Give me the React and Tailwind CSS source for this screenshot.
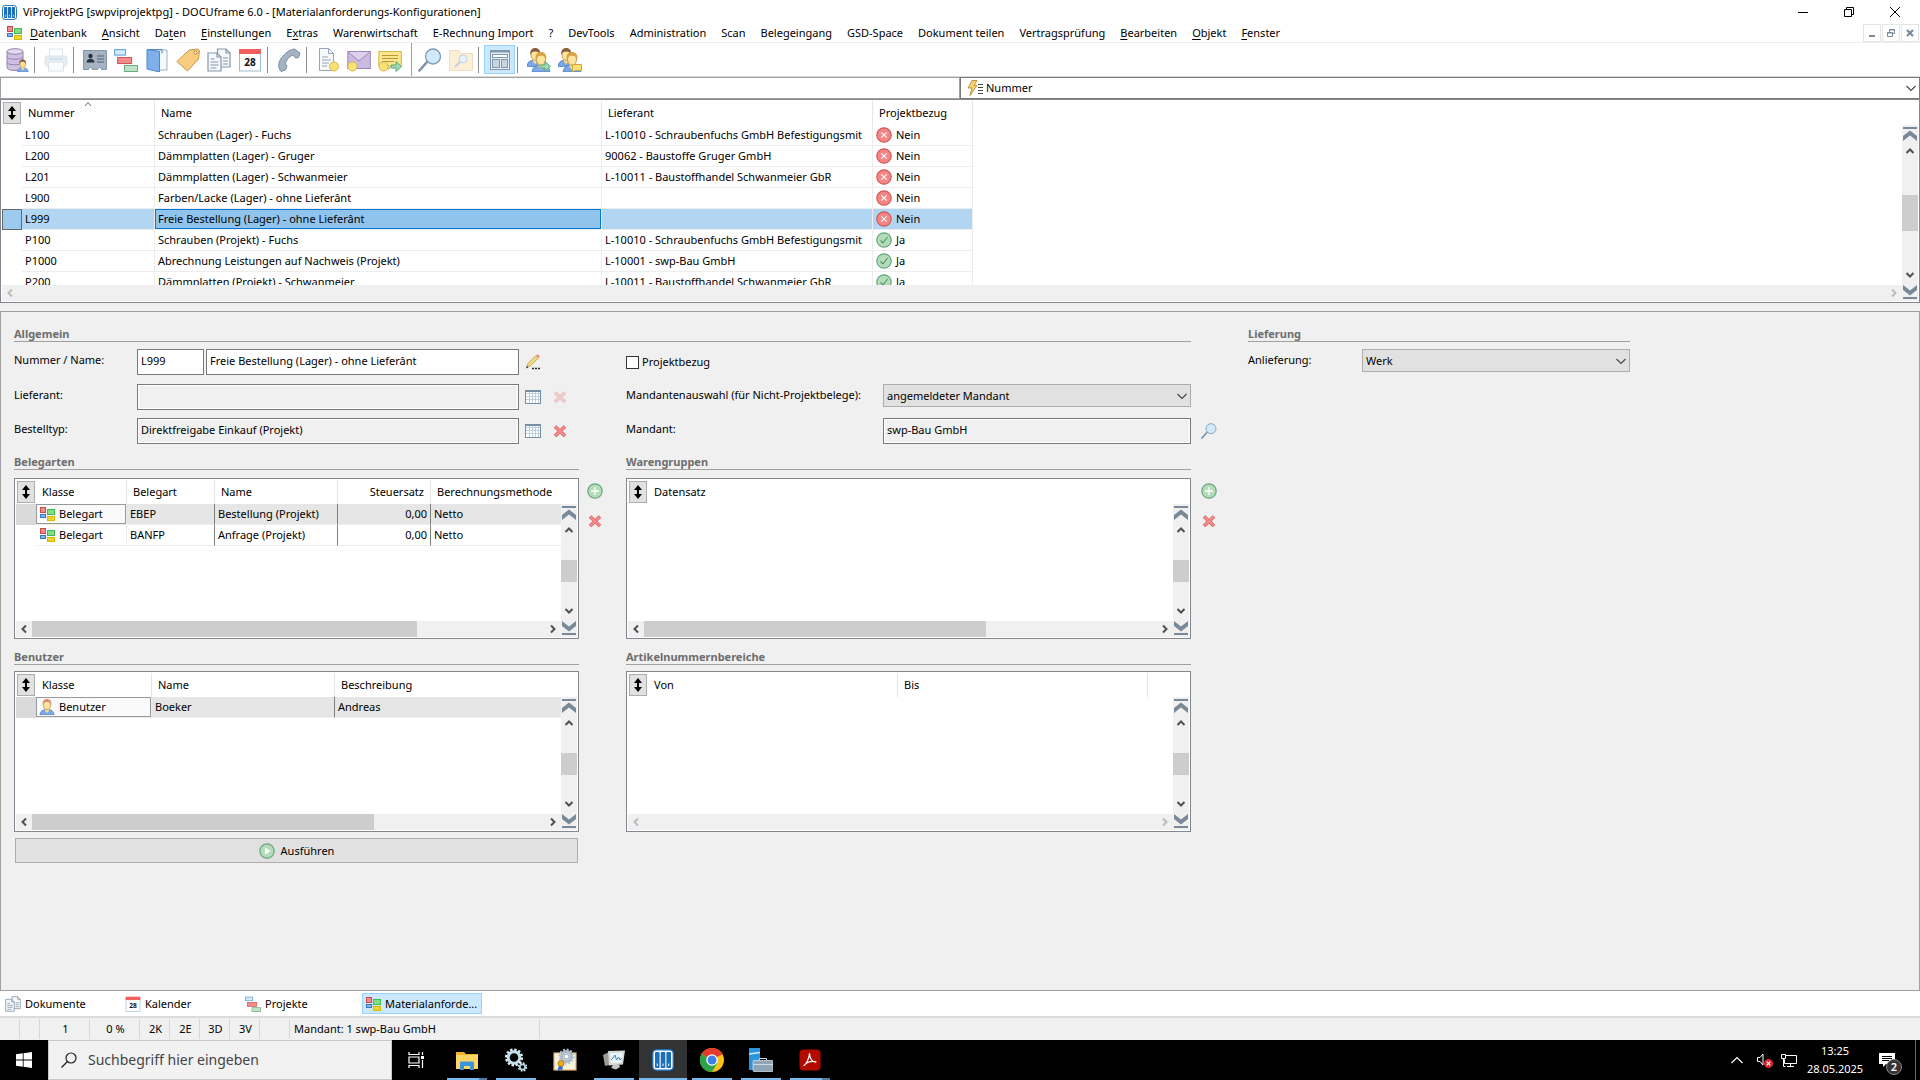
import { useState } from "react";

// ---------- small icons ----------

const BlocksIcon = ({ className = "w-4 h-4" }) => (
  <svg className={className} viewBox="0 0 16 16">
    <rect x="1.5" y="1.5" width="5" height="5" fill="#f28b8b" stroke="#c94a4a" />
    <rect x="1.5" y="8.5" width="5" height="3" fill="#8ab4ee" stroke="#3f74c4" />
    <rect x="8.5" y="3.5" width="7" height="5" fill="#84dd84" stroke="#3dbb55" />
    <rect x="8.5" y="10.5" width="7" height="4" fill="#ecd62c" stroke="#d9b60c" />
  </svg>
);

const AppIcon = ({ className = "w-4 h-4" }) => (
  <svg className={className} viewBox="0 0 22 22">
    <rect x="0.7" y="0.7" width="20.6" height="20.6" rx="4" fill="#fff" stroke="#1b6fb8" strokeWidth="1.4" />
    <rect x="3" y="3" width="4.6" height="16" rx="1" fill="#1b6fb8" />
    <rect x="8.7" y="3" width="4.6" height="16" rx="1" fill="#1b6fb8" />
    <rect x="14.4" y="3" width="4.6" height="16" rx="1" fill="#1b6fb8" />
    <path d="M5.3 14.5v2.5M11 14.5v2.5M16.7 14.5v2.5" stroke="#fff" strokeWidth="1" />
  </svg>
);

const PagesIcon = ({ className = "w-6 h-6" }) => (
  <svg className={className} viewBox="0 0 24 24" fill="#f6f8fa" stroke="#8497a9" strokeWidth="1.2">
    <path d="M10.5 1h8.500l4 4v14h-12.500z" />
    <path d="M19 1v4h4" fill="none" />
    <path d="M1 5h9l4 4v14h-13z" />
    <path d="M10 5v4h4M3.500 11h4M3.500 14h8M3.500 17h8M3.500 20h6M16 10h5M16 13h5M16 16h5" fill="none" />
  </svg>
);

const TasksIcon = ({ className = "w-6 h-6" }) => (
  <svg className={className} viewBox="0 0 24 24">
    <rect x="0.6" y="1.6" width="11" height="5.500" fill="#cfe9fd" stroke="#5f9fd0" />
    <rect x="3.600" y="9.500" width="14" height="6" fill="#f48b8b" stroke="#d05555" />
    <rect x="10.500" y="17.500" width="13" height="6" fill="#bfe3c6" stroke="#6cab80" />
  </svg>
);

const CalendarIcon = ({ className = "w-6 h-6" }) => (
  <svg className={className} viewBox="0 0 24 24">
    <rect x="1.500" y="2" width="21" height="21" fill="#fdfdfd" stroke="#9fbdd0" />
    <rect x="1" y="1" width="22" height="5" fill="#f0605f" />
    <text x="12" y="18" textAnchor="middle" fontSize="10" fontWeight="700" fontFamily="Open Sans, sans-serif" fill="#111">28</text>
  </svg>
);

const PersonShape = ({ hair = "#8a5a3c" }) => (
  <g>
    <path d="M1 16c0-3.500 2.500-5 5-5.500h4c2.500.5 5 2 5 5.500z" fill="#7ca9e6" stroke="#4c7dc4" strokeWidth=".7" />
    <path d="M6 9h4v3l-2 2-2-2z" fill="#f7dc90" />
    <ellipse cx="8" cy="6" rx="3.600" ry="4.700" fill="#fbe49c" stroke="#c99348" strokeWidth=".8" />
    <path d="M3.800 6c-.8-4 1.500-6 4.200-6s5 2 4.200 6c-.6-2.500-2-3-4.200-3s-3.600.5-4.200 3z" fill={hair} />
  </g>
);

const UserIcon = () => (
  <svg className="w-4 h-4" viewBox="0 0 16 16"><PersonShape hair="#dd8d73" /></svg>
);

const SearchGlass = ({ className = "w-6 h-6" }) => (
  <svg className={className} viewBox="0 0 24 24">
    <path d="M1.500 22.500l8-9" stroke="#7d93a8" strokeWidth="2.600" strokeLinecap="round" />
    <circle cx="15" cy="8.500" r="7.500" fill="#cfe9fd" stroke="#8298b3" strokeWidth="1.300" />
  </svg>
);

const CrossIcon = ({ className = "w-4 h-4" }) => (
  <svg className={className} viewBox="0 0 16 16">
    <path d="M3 3.500l10 9.500M13 3.500l-10 9.500" stroke="#e06464" strokeWidth="3.600" />
    <path d="M3.500 4l9 8.500M12.500 4l-9 8.500" stroke="#f58d8d" strokeWidth="1.800" />
  </svg>
);

const GreenDot = ({ children }) => (
  <svg className="w-4 h-4" viewBox="0 0 16 16">
    <circle cx="8" cy="8" r="7.200" fill="#b5dcb8" stroke="#67a67e" strokeWidth="1.200" />
    {children}
  </svg>
);

const PlusIcon = () => (
  <GreenDot><path d="M8 4v8M4 8h8" stroke="#fff" strokeWidth="1.300" /></GreenDot>
);
const PlayIcon = () => (
  <GreenDot><path d="M6 4.500l5.500 3.500-5.500 3.500z" fill="#fff" /></GreenDot>
);
const YesIcon = () => (
  <GreenDot><path d="M4.500 8.500l2.500 2.500 4.500-6" fill="none" stroke="#4f9068" strokeWidth="1.100" /></GreenDot>
);
const NoIcon = () => (
  <svg className="w-4 h-4" viewBox="0 0 16 16">
    <circle cx="8" cy="8" r="7.200" fill="#f58585" stroke="#d05a5a" strokeWidth="1.200" />
    <path d="M5.300 5.300l5.400 5.400M10.700 5.300l-5.400 5.400" stroke="#fff" strokeWidth="1.200" />
  </svg>
);

const SheetIcon = () => (
  <svg className="w-4 h-4" viewBox="0 0 16 16">
    <rect x="0.500" y="1.500" width="15" height="13" fill="#fff" stroke="#7390a8" />
    <path d="M1 4.500h14M1 7.500h14M1 10.500h14M4.500 3v11M7.500 3v11M10.500 3v11M13.500 3v11" stroke="#bfd0e0" />
    <path d="M0 2h16" stroke="#7390a8" strokeWidth="2" />
  </svg>
);

const PencilIcon = () => (
  <svg className="w-4 h-4" viewBox="0 0 16 16">
    <path d="M1.500 13.500l1.500-4 8-8 2.500 2.200-8 8z" fill="#f6dc7c" stroke="#b8963f" strokeWidth=".8" />
    <path d="M11 1.700l1.500-1.400 2.500 2.200-1.500 1.600z" fill="#e88a8a" />
    <path d="M1 14.500l.8-2.500 1.600 1.400z" fill="#333" />
    <path d="M7 14.500h2M10 14.500h2M13 14.500h2" stroke="#222" strokeWidth="1.500" />
  </svg>
);

const Chevron = () => (
  <svg className="w-3 h-3 shrink-0 pointer-events-none" viewBox="0 0 12 12">
    <path d="M1.500 4l4.500 4.500 4.500-4.500" fill="none" stroke="#444" strokeWidth="1.100" />
  </svg>
);

// ---------- toolbar icons ----------

const DatabaseIcon = () => (
  <svg className="w-6 h-6" viewBox="0 0 24 24">
    <path d="M2 3.500v16c0 4 16 4 16 0v-16z" fill="#cfc0e2" stroke="#9484b4" />
    <ellipse cx="10" cy="3.500" rx="8" ry="2.800" fill="#e2d8ef" stroke="#9484b4" />
    <path d="M2 9c0 3 16 3 16 0M2 14.500c0 3 16 3 16 0" fill="none" stroke="#9484b4" />
    <g transform="translate(11.500 11.500) scale(.78)"><PersonShape /></g>
  </svg>
);

const PrinterIcon = () => (
  <svg className="w-6 h-6 opacity-40" viewBox="0 0 24 24" stroke="#a8bccb">
    <rect x="5.500" y="1" width="13" height="8" fill="#fff" />
    <rect x="1" y="8" width="22" height="10" rx="2" fill="#c8d6e0" />
    <rect x="4.500" y="14" width="15" height="9" fill="#f3f7fb" />
    <path d="M5 11h14" stroke="#87b4dc" strokeWidth="2" />
  </svg>
);

const CardIcon = () => (
  <svg className="w-6 h-6" viewBox="0 0 24 24">
    <path d="M0.500 2.500h23v19h-5l-2-3-2 3h-5l-2-3-2 3h-5z" fill="#a3b3c2" stroke="#8397aa" />
    <circle cx="7.500" cy="8" r="2.200" fill="#26323c" />
    <path d="M3.500 14.500c0-5 8-5 8 0z" fill="#26323c" />
    <path d="M14 8h7M14 11h7M14 14h7" stroke="#53626f" strokeWidth="1.200" />
  </svg>
);

const BookIcon = () => (
  <svg className="w-6 h-6" viewBox="0 0 24 24">
    <path d="M5 2h17v20h-7" fill="#f6f9fc" stroke="#9db5c8" />
    <path d="M2 1.500l12.500 2v20.500l-12.500-3z" fill="#7fb0ec" stroke="#4f86cc" />
    <path d="M2 1.500h15v4" fill="none" stroke="#4f86cc" />
  </svg>
);

const TagIcon = () => (
  <svg className="w-6 h-6" viewBox="0 0 24 24">
    <path d="M0.800 13.500l12.500-11.500 8.500-1 1.700 1.500-1 8.500-11 12z" fill="#f8cd80" stroke="#c8924a" />
    <circle cx="19.500" cy="4.500" r="1.500" fill="#fff" stroke="#b58240" />
  </svg>
);

const PhoneIcon = () => (
  <svg className="w-6 h-6" viewBox="0 0 24 24">
    <path d="M17.500 1l5.500 4-1.500 4.500-3 .5-2.500-3c-4 1.500-7 5.500-7.500 9l1.500 2-1.500 4-4.500 1.500c-3.500-4-3-10 1.500-15s8-7 12-7.500z" fill="#a3b3c4" stroke="#7b8fa5" />
  </svg>
);

const Coin = ({ x, y }) => <circle cx={x} cy={y} r="4.500" fill="#fbe277" stroke="#d8b84c" />;
const GreenArrow = () => <path d="M13 17h5v-3.500l5.500 5-5.500 5v-3.500h-5z" fill="#9fdab0" stroke="#5fa878" />;

const DocCoinIcon = () => (
  <svg className="w-6 h-6" viewBox="0 0 24 24">
    <path d="M3.500 0.500h9l5 5v17h-14z" fill="#f6f8fa" stroke="#95a5b5" />
    <path d="M12.500 0.500v5h5M6 9h6M6 12h9M6 15h7M6 18h5" fill="none" stroke="#95a5b5" />
    <Coin x={18} y={18.500} />
  </svg>
);

const MailCoinIcon = () => (
  <svg className="w-6 h-6" viewBox="0 0 24 24">
    <rect x="0.800" y="3.500" width="22.500" height="17" fill="#cbbbe0" stroke="#9b87bd" />
    <path d="M1 4l11 9 11-9" fill="#ddd1ec" stroke="#9b87bd" />
    <Coin x={5.500} y={18.500} />
  </svg>
);

const NoteCoinIcon = () => (
  <svg className="w-6 h-6" viewBox="0 0 24 24">
    <path d="M0.800 3.500h22.500v14h-10l-3 4v-4h-9.500z" fill="#fbe68c" stroke="#d6b64d" />
    <path d="M4 7.500h16M4 10.500h16M4 13.500h12" stroke="#b7963e" />
    <Coin x={5.500} y={18.500} />
    <GreenArrow />
  </svg>
);

const FolderSearchIcon = () => (
  <svg className="w-6 h-6 opacity-50" viewBox="0 0 24 24">
    <path d="M0.500 2.500h9l2 3h12v17h-23z" fill="#fbe0ac" stroke="#dcc08c" />
    <path d="M6 19l5-5" stroke="#8aa6bd" strokeWidth="2" />
    <circle cx="14" cy="11" r="4" fill="#cfe9fd" stroke="#8aa6bd" />
  </svg>
);

const LayoutIcon = () => (
  <svg className="w-6 h-6" viewBox="0 0 24 24" stroke="#7f98ae">
    <rect x="2.500" y="2.500" width="19" height="19" fill="#e8eef3" />
    <path d="M2.500 3.500h19" strokeWidth="2" />
    <rect x="4.500" y="6.500" width="15" height="3" fill="#fff" />
    <rect x="4.500" y="11.500" width="7" height="8" fill="#c9d6e1" />
    <rect x="13.500" y="11.500" width="6" height="8" fill="#c9d6e1" />
  </svg>
);

const UsersIcon = ({ note }) => (
  <svg className="w-6 h-6" viewBox="0 0 24 24">
    <g transform="translate(-1 0) scale(1.150)"><PersonShape hair="#8b5f3d" /></g>
    <g transform="translate(4 4) scale(1.250)"><PersonShape hair="#d9a244" /></g>
    {note
      ? <path d="M14.500 16.500h9v6h-7l-2 1.500z" fill="#fbe277" stroke="#c9a83c" />
      : <GreenArrow />}
  </svg>
);

// ---------- scroll bars ----------

const Arrow = ({ dir, off }) => {
  const d = {
    up: "M4.500 10l3.500-3.500 3.500 3.500",
    down: "M4.500 6l3.500 3.500 3.500-3.500",
    left: "M10 4.500l-3.500 3.500 3.500 3.500",
    right: "M6 4.500l3.500 3.500-3.500 3.500",
  }[dir];
  return (
    <svg className="w-4 h-4 shrink-0" viewBox="0 0 16 16">
      <path d={d} fill="none" stroke={off ? "#bcbcbc" : "#505050"} strokeWidth="2" />
    </svg>
  );
};

const JumpArrow = ({ down }) => (
  <svg className={down ? "w-4 h-4 rotate-180" : "w-4 h-4"} viewBox="0 0 16 16">
    <path d="M1 3h14" stroke="#7a8999" strokeWidth="2" />
    <path d="M1 11v5l7-5.500 7 5.500v-5l-7-5.500z" fill="#7a8999" />
  </svg>
);

function VScroll({ tall }) {
  return (
    <div className="w-4 mt-6 shrink-0 bg-[#f0f0f0] flex flex-col items-center">
      <JumpArrow />
      <span className="h-5 flex items-center"><Arrow dir="up" /></span>
      <div className="flex-1 w-full flex items-center">
        <div className={tall ? "w-full h-9 bg-[#cdcdcd]" : "w-full h-[22px] bg-[#cdcdcd]"} />
      </div>
      <span className="h-5 flex items-center"><Arrow dir="down" /></span>
      <JumpArrow down />
    </div>
  );
}

function HScroll({ thumb }) {
  return (
    <div className="h-4 shrink-0 bg-[#f0f0f0] flex items-center">
      <Arrow dir="left" off={!thumb} />
      <div className="flex-1 h-full">
        {thumb && <div className={`h-full bg-[#cdcdcd] ${thumb}`} />}
      </div>
      <Arrow dir="right" off={!thumb} />
    </div>
  );
}

// ---------- data grid ----------

const SortButton = () => (
  <button className="block ml-px w-[18px] h-[22px] bg-[#e1e1e1] border border-[#adadad]" aria-label="Sortieren">
    <svg className="w-4 h-5" viewBox="0 0 16 20">
      <path d="M8 3l4 5h-3v4h3l-4 5-4-5h3v-4h-3z" fill="#000" />
    </svg>
  </button>
);

function DataGrid({ columns, rows, selected, focusCol, main, thumb, className }) {
  const rowColor = main ? "bg-[#b2d6f2]" : "bg-[#e6e6e6]";
  const headColor = main ? "bg-[#9dcbef] border border-[#666]" : "bg-[#dadada]";
  const focusColor = main ? "bg-[#91c4ec] border border-[#0078d7]" : "bg-[#fafafa] border border-[#999]";

  return (
    <div className={`flex bg-white border border-[#828790] p-px ${className}`}>
      <div className="flex-1 min-w-0 flex flex-col">
        <div className="flex-1 min-h-0 overflow-hidden">
          <table className={`table-fixed border-separate border-spacing-0 whitespace-nowrap ${main ? "w-[971px]" : "w-full"}`}>
            <colgroup>
              <col className="w-5" />
              {columns.map((c) => <col key={c.label} className={c.width} />)}
            </colgroup>
            <thead>
              <tr className="h-6">
                <th className="p-0"><SortButton /></th>
                {columns.map((c) => (
                  <th
                    key={c.label}
                    className={`p-0 px-1.5 font-normal ${c.right ? "text-right" : "text-left"} ${c.last ? "" : "border-r border-[#e5e5e5]"}`}
                  >
                    {c.sorted ? (
                      <span className="relative block">
                        {c.label}
                        <svg className="absolute left-[56px] -top-1 w-2 h-1.5" viewBox="0 0 8 6">
                          <path d="M1 5l3-3.500 3 3.500" fill="none" stroke="#666" />
                        </svg>
                      </span>
                    ) : c.label}
                  </th>
                ))}
              </tr>
            </thead>
            <tbody>
              {rows.map((row, r) => (
                <tr key={row[0] + r} className={r === selected ? rowColor : ""}>
                  <td className="p-0">
                    <div className={`h-[21px] ${r === selected ? headColor : ""}`} />
                  </td>
                  {row.map((value, i) => {
                    const col = columns[i];
                    const focus = r === selected && i === focusCol;
                    return (
                      <td
                        key={col.label}
                        className={`p-0 border-b border-b-[#ededed] ${col.last ? "" : "border-r"} ${col.dark ? "border-r-[#808080]" : "border-r-[#ededed]"}`}
                      >
                        <div className={`h-5 flex items-center gap-1 ${col.right ? "justify-end" : ""} ${focus ? `${focusColor} px-0.5` : "px-[3px]"}`}>
                          {col.icon && col.icon(value)}
                          {value}
                        </div>
                      </td>
                    );
                  })}
                </tr>
              ))}
            </tbody>
          </table>
        </div>
        <HScroll thumb={thumb} />
      </div>
      <VScroll tall={main} />
    </div>
  );
}

// ---------- form parts ----------

const Heading = ({ children, className = "" }) => (
  <h2 className={`h-[15px] leading-[14px] font-bold text-[#6d6d6d] border-b border-[#a0a0a0] ${className}`}>{children}</h2>
);

const Label = ({ id, children, className = "w-[123px]" }) => (
  <label htmlFor={id} className={`shrink-0 leading-[22px] ${className}`}>{children}</label>
);

const inputBase = "min-w-0 h-[26px] px-[3px] pb-1 border border-[#7a7a7a] outline-none";
const inputLocked = `${inputBase} flex-1 bg-[#f0f0f0] shadow-[inset_0_0_0_1px_#fff]`;

const IconButton = ({ label, children, className = "" }) => (
  <button aria-label={label} className={`w-4 h-[26px] flex items-center justify-center ${className}`}>{children}</button>
);

const Select = ({ id, value, options }) => (
  <div className="flex-1 min-w-0 h-[23px] flex items-center pr-0.5 bg-[#e1e1e1] border border-[#adadad]">
    <select id={id} defaultValue={value} className="flex-1 min-w-0 h-full px-[3px] appearance-none bg-transparent outline-none">
      {options.map((o) => <option key={o}>{o}</option>)}
    </select>
    <Chevron />
  </div>
);

const AddRemove = ({ className }) => (
  <div className={`w-[47px] shrink-0 pt-[5px] flex flex-col gap-[14px] ${className}`}>
    <button aria-label="Hinzufügen"><PlusIcon /></button>
    <button aria-label="Entfernen"><CrossIcon /></button>
  </div>
);

// ---------- data ----------

const menus = [
  ["", "D", "atenbank"], ["", "A", "nsicht"], ["Da", "t", "en"], ["", "E", "instellungen"], ["E", "x", "tras"],
  ["Warenwirtschaft"], ["E-Rechnung Import"], ["?"], ["DevTools"], ["Administration"], ["Scan"], ["Belegeingang"],
  ["GSD-Space"], ["Dokument teilen"], ["Vertragsprüfung"], ["", "B", "earbeiten"], ["", "O", "bjekt"], ["", "F", "enster"],
];

const tools = [
  ["Datenbank", <DatabaseIcon />], null,
  ["Drucken", <PrinterIcon />], null,
  ["Adressen", <CardIcon />], ["Projekte", <TasksIcon />], ["Journal", <BookIcon />], ["Artikel", <TagIcon />],
  ["Dokumente", <PagesIcon />], ["Kalender", <CalendarIcon />], null,
  ["Telefon", <PhoneIcon />], null,
  ["Neues Dokument", <DocCoinIcon />], ["Neue Mail", <MailCoinIcon />], ["Neue Notiz", <NoteCoinIcon />], "group",
  ["Suchen", <SearchGlass />], ["Ordner durchsuchen", <FolderSearchIcon />], null,
  ["Ansicht", <LayoutIcon />, true], null,
  ["Weiterleiten", <UsersIcon />], ["Nachricht", <UsersIcon note />],
];

const configColumns = [
  { label: "Nummer", width: "w-[133px]", sorted: true },
  { label: "Name", width: "w-[447px]" },
  { label: "Lieferant", width: "w-[271px]" },
  { label: "Projektbezug", width: "w-[100px]", icon: (v) => (v === "Ja" ? <YesIcon /> : <NoIcon />) },
];

const configRows = [
  ["L100", "Schrauben (Lager) - Fuchs", "L-10010 - Schraubenfuchs GmbH Befestigungsmit", "Nein"],
  ["L200", "Dämmplatten (Lager) - Gruger", "90062 - Baustoffe Gruger GmbH", "Nein"],
  ["L201", "Dämmplatten (Lager) - Schwanmeier", "L-10011 - Baustoffhandel Schwanmeier GbR", "Nein"],
  ["L900", "Farben/Lacke (Lager) - ohne Lieferânt", "", "Nein"],
  ["L999", "Freie Bestellung (Lager) - ohne Lieferânt", "", "Nein"],
  ["P100", "Schrauben (Projekt) - Fuchs", "L-10010 - Schraubenfuchs GmbH Befestigungsmit", "Ja"],
  ["P1000", "Abrechnung Leistungen auf Nachweis (Projekt)", "L-10001 - swp-Bau GmbH", "Ja"],
  ["P200", "Dämmplatten (Projekt) - Schwanmeier", "L-10011 - Baustoffhandel Schwanmeier GbR", "Ja"],
];

const belegColumns = [
  { label: "Klasse", width: "w-[91px]", icon: () => <BlocksIcon /> },
  { label: "Belegart", width: "w-[88px]", dark: true },
  { label: "Name", width: "w-[123px]", dark: true },
  { label: "Steuersatz", width: "w-[93px]", right: true, dark: true },
  { label: "Berechnungsmethode", last: true },
];

const belegRows = [
  ["Belegart", "EBEP", "Bestellung (Projekt)", "0,00", "Netto"],
  ["Belegart", "BANFP", "Anfrage (Projekt)", "0,00", "Netto"],
];

const userColumns = [
  { label: "Klasse", width: "w-[116px]", icon: () => <UserIcon /> },
  { label: "Name", width: "w-[183px]", dark: true },
  { label: "Beschreibung", last: true },
];

const rangeColumns = [
  { label: "Von", width: "w-[250px]" },
  { label: "Bis", width: "w-[250px]" },
  { label: "", last: true },
];

const tabs = [
  ["Dokumente", <PagesIcon className="w-4 h-4" />],
  ["Kalender", <CalendarIcon className="w-4 h-4" />],
  ["Projekte", <TasksIcon className="w-4 h-4" />],
  ["Materialanforde...", <BlocksIcon />],
];

const statusCells = [
  ["", "w-5"], ["", "w-5"], ["1", "w-[50px]"], ["0 %", "w-[50px]"], ["2K", "w-[30px]"], ["2E", "w-[30px]"],
  ["3D", "w-[30px]"], ["3V", "w-[30px]"], ["", "w-[30px]"],
];

// ---------- window parts ----------

function TitleBar() {
  return (
    <header className="h-6 flex items-center px-0.5">
      <AppIcon className="w-[15px] h-[15px]" />
      <h1 className="flex-1 pl-1.5">ViProjektPG [swpviprojektpg] - DOCUframe 6.0 - [Materialanforderungs-Konfigurationen]</h1>
      <button aria-label="Minimieren" className="w-[46px] h-5 flex items-center justify-center">
        <svg className="w-3 h-3" viewBox="0 0 12 12"><path d="M1 6.500h10" stroke="#000" /></svg>
      </button>
      <button aria-label="Verkleinern" className="w-[46px] h-5 flex items-center justify-center">
        <svg className="w-3 h-3" viewBox="0 0 12 12" fill="none" stroke="#000">
          <path d="M1.500 3.500h7v7h-7zM3.500 3.500v-2h7v7h-2" />
        </svg>
      </button>
      <button aria-label="Schließen" className="w-[46px] h-5 flex items-center justify-center">
        <svg className="w-3 h-3" viewBox="0 0 12 12"><path d="M1 1l10 10M11 1l-10 10" stroke="#000" /></svg>
      </button>
    </header>
  );
}

function MenuBar() {
  const box = "w-[18px] h-[18px] border border-[#e5e5e5] flex items-center justify-center";
  return (
    <nav className="h-[19px] flex items-center border-b border-[#ededed]">
      <BlocksIcon className="w-4 h-4 ml-1.5 mr-2" />
      <div className="flex-1 flex gap-[15px]">
        {menus.map(([pre, key, rest]) => (
          <button key={pre + key + rest} className="whitespace-nowrap">
            {pre}{key && <span className="underline underline-offset-2">{key}</span>}{rest}
          </button>
        ))}
      </div>
      <div className="flex gap-px pr-px">
        <button aria-label="Fenster minimieren" className={box}>
          <svg className="w-2.5 h-2.5" viewBox="0 0 10 10"><path d="M2 8h6" stroke="#7a8999" strokeWidth="2" /></svg>
        </button>
        <button aria-label="Fenster verkleinern" className={box}>
          <svg className="w-2.5 h-2.5" viewBox="0 0 10 10" fill="none" stroke="#7a8999">
            <path d="M1.500 4.500h5v4h-5zM3.500 4v-2.500h5v4h-2M1 5h6M3 2h6" />
          </svg>
        </button>
        <button aria-label="Fenster schließen" className={box}>
          <svg className="w-2.5 h-2.5" viewBox="0 0 10 10"><path d="M2 2l6 6M8 2l-6 6" stroke="#7a8999" strokeWidth="2.200" /></svg>
        </button>
      </div>
    </nav>
  );
}

function Toolbar() {
  return (
    <div className="h-[34px] flex items-center pl-px border-b border-[#d9d9d9]">
      {tools.map((t, i) => {
        if (t === null) return <span key={i} className="w-1.5 h-[26px] ml-0.5 border-l border-[#8c8c8c]" />;
        if (t === "group") return <span key={i} className="w-[3px] h-full ml-1.5 border-l border-[#a0a0a0]" />;
        const [label, icon, active] = t;
        return (
          <button
            key={i}
            aria-label={label}
            className={`w-[31px] h-[29px] flex items-center justify-center ${active ? "bg-[#cce8ff] border border-[#99d1ff]" : ""}`}
          >
            {icon}
          </button>
        );
      })}
    </div>
  );
}

function Taskbar() {
  const line = "h-0.5 bg-[#76b9ed]";
  const apps = [
    {
      name: "Explorer", stack: true,
      icon: (
        <svg className="w-6 h-6" viewBox="0 0 24 24">
          <path d="M1 4h8l2 2h12v15h-22z" fill="#f0b429" />
          <path d="M1 7h22v14h-22z" fill="#fbd667" />
          <path d="M5 22v-7c0-1 .5-1.500 1.500-1.500h11c1 0 1.500.5 1.500 1.500v7h-4v-4h-6v4z" fill="#3a95d8" />
        </svg>
      ),
    },
    {
      name: "Dienste", run: true,
      icon: (
        <svg className="w-6 h-6" viewBox="0 0 24 24" fill="none">
          <circle cx="10" cy="9.500" r="7.800" stroke="#e6f1f7" strokeWidth="2.500" strokeDasharray="2.400 1.680" />
          <circle cx="10" cy="9.500" r="5.800" stroke="#c4dfec" strokeWidth="3" />
          <circle cx="18.500" cy="19" r="3.900" stroke="#d6e8f1" strokeWidth="1.600" strokeDasharray="1.700 1.360" />
          <circle cx="18.500" cy="19" r="2.700" stroke="#b5d5e6" strokeWidth="1.800" />
        </svg>
      ),
    },
    {
      name: "Zertifikate",
      icon: (
        <svg className="w-6 h-6" viewBox="0 0 24 24">
          <rect x="1" y="5" width="22" height="17" fill="#faf1dd" stroke="#e0b67c" strokeWidth="1.200" />
          <circle cx="13.500" cy="8.500" r="5" fill="#dfe9f0" stroke="#a9bac6" strokeWidth="3" />
          <circle cx="13.500" cy="8.500" r="7" fill="none" stroke="#b5c5d0" strokeWidth="2" strokeDasharray="2 1.660" />
          <circle cx="13.500" cy="8.500" r="2.500" fill="#fff" stroke="#8fa3b2" />
          <path d="M6 17l-1.500 6 3-1.500 1.500 2 1-6z" fill="#2c6fd8" />
          <circle cx="8" cy="15.500" r="3" fill="#e8a820" stroke="#b5790c" strokeWidth=".8" />
        </svg>
      ),
    },
    {
      name: "Leistung", run: true,
      icon: (
        <svg className="w-6 h-6" viewBox="0 0 24 24">
          <path d="M1 7l6-3 4 12-8 2z" fill="#9c9c96" />
          <path d="M6 3l17-.5-2 14-14 1z" fill="#d7d9d6" />
          <path d="M8 5l13-.5-1.500 10-11 .8z" fill="#eaf5fb" />
          <path d="M9 12l2-2 2-3 1.500 5 2-3 1.500 3 1.500-2" fill="none" stroke="#3e86b8" />
          <path d="M11 17l6-.5 1 2.500-4 2.500-5-1.500z" fill="#c3c5c2" />
        </svg>
      ),
    },
    { name: "DOCUframe", active: true, icon: <AppIcon className="w-[22px] h-[22px]" /> },
    {
      name: "Chrome", run: true,
      icon: (
        <svg className="w-6 h-6" viewBox="0 0 24 24">
          <circle cx="12" cy="12" r="12" fill="#fbc116" />
          <path d="M12 12L1.600 6A12 12 0 0 1 22.400 6z" fill="#e33b2e" />
          <path d="M1.600 6A12 12 0 0 0 12 24l5.200-9-5.200-3z" fill="#2ba24c" />
          <path d="M12 6.500h10.600a12 12 0 0 0-.2-.5H6z" fill="#e33b2e" />
          <circle cx="12" cy="12" r="5.800" fill="#fff" />
          <circle cx="12" cy="12" r="4.500" fill="#3f7fe8" />
        </svg>
      ),
    },
    {
      name: "Server-Manager", run: true,
      icon: (
        <svg className="w-6 h-6" viewBox="0 0 24 24">
          <rect x="0" y="0" width="11" height="22" fill="#2b94dc" />
          <path d="M0 6l11-1.500" stroke="#d4ecfb" strokeWidth="1.500" />
          <rect x="4" y="12.500" width="20" height="11" rx="1" fill="#8fa6b8" stroke="#d0dae2" strokeWidth=".8" />
          <path d="M10.500 12v-1.500h7v1.500M4 16.500h20" fill="none" stroke="#d0dae2" />
        </svg>
      ),
    },
    {
      name: "Acrobat", stack: true,
      icon: (
        <svg className="w-[22px] h-[22px]" viewBox="0 0 22 22">
          <rect x="0.500" y="0.500" width="21" height="21" rx="4" fill="#b30b00" />
          <path d="M5 16.500c1.500-.5 5-6 5.500-12 .2 5 3 9 6.500 8.500-3-1.500-9-.5-12 3.500z" fill="none" stroke="#fff" strokeWidth="1.200" strokeLinejoin="round" />
        </svg>
      ),
    },
  ];

  return (
    <footer className="h-10 shrink-0 bg-black text-white flex">
      <button aria-label="Start" className="w-12 flex items-center justify-center">
        <svg className="w-4 h-4" viewBox="0 0 16 16" fill="#fff">
          <path d="M0 2.300l6.800-1v6.300h-6.800zM7.600 1.200l8.400-1.200v7.600h-8.400zM0 8.400h6.800v6.300l-6.800-1zM7.600 8.400h8.400v7.600l-8.400-1.200z" />
        </svg>
      </button>
      <label className="w-[344px] flex items-center pl-3 bg-[#f2f2f2] border border-[#c8c8c8]">
        <svg className="w-4 h-4" viewBox="0 0 16 16" fill="none" stroke="#222" strokeWidth="1.200">
          <circle cx="10" cy="6" r="5" /><path d="M6.500 9.500l-6 6" />
        </svg>
        <input
          aria-label="Suche"
          placeholder="Suchbegriff hier eingeben"
          className="flex-1 min-w-0 px-[11px] text-sm bg-transparent outline-none placeholder:text-[#444]"
        />
      </label>
      <button aria-label="Taskansicht" className="w-12 mr-[3px] flex items-center justify-center">
        <svg className="w-4 h-4" viewBox="0 0 16 16" fill="none" stroke="#fff" strokeWidth="1.200">
          <path d="M1 0v2.500h10v-2.500M1 16v-2.500h10v2.500M1 5h10v6h-10zM14.500 0v3M14.500 8v8" />
          <path d="M13 5.500h3" strokeWidth="3" />
        </svg>
      </button>
      <div className="flex gap-px">
        {apps.map((a) => (
          <button key={a.name} aria-label={a.name} className={`w-12 flex flex-col ${a.active ? "bg-[#333]" : ""}`}>
            <span className="flex-1 pt-0.5 w-full flex items-center justify-center">{a.icon}</span>
            {a.active && <span className={`${line} w-full`} />}
            {a.run && <span className={`${line} w-10 mx-auto`} />}
            {a.stack && (
              <span className="w-10 mx-auto flex">
                <span className={`${line} flex-1`} />
                <span className="w-2 h-0.5 bg-[#4f7ea6]" />
              </span>
            )}
            {!a.active && !a.run && !a.stack && <span className="h-0.5" />}
          </button>
        ))}
      </div>
      <div className="flex-1 flex items-center justify-end">
        <button aria-label="Ausgeblendete Symbole" className="w-6 mr-0.5">
          <svg className="w-3 h-3 mx-auto" viewBox="0 0 12 12"><path d="M0.500 9l5.500-5.500 5.500 5.500" fill="none" stroke="#fff" strokeWidth="1.200" /></svg>
        </button>
        <button aria-label="Ton" className="w-6 pl-1.5">
          <svg className="w-4 h-4" viewBox="0 0 16 16">
            <path d="M0.500 5.500h2.500l3-3.500v11l-3-3.500h-2.500z" fill="none" stroke="#fff" />
            <circle cx="11.500" cy="11.500" r="4.500" fill="#e0242e" />
            <path d="M9.700 9.700l3.600 3.600M13.300 9.700l-3.600 3.600" stroke="#fff" strokeWidth="1.200" />
          </svg>
        </button>
        <button aria-label="Netzwerk" className="w-6 pl-1.5">
          <svg className="w-4 h-4" viewBox="0 0 16 16" fill="none" stroke="#fff">
            <path d="M5 3.500h10.500v8h-12v-4M9.500 11.500v3M6 14.500h7M0.500 2.500h4v4h-4zM2.500 6.500v8h2" />
          </svg>
        </button>
        <time className="w-[72px] text-center leading-[18px]">13:25<br />28.05.2025</time>
        <button aria-label="Benachrichtigungen" className="relative w-11 h-full pl-2">
          <svg className="w-4 h-4" viewBox="0 0 16 16">
            <path d="M0 1h16v11h-9l-3 3v-3h-4z" fill="#fff" />
            <path d="M3 4.500h10M3 6.500h10M3 8.500h7" stroke="#000" />
          </svg>
          <span className="absolute left-[15px] top-[19px] w-4 h-4 leading-[14px] rounded-full bg-[#333] border border-[#888] font-semibold text-center">2</span>
        </button>
        <span className="h-full w-[5px] border-l border-[#666]" />
      </div>
    </footer>
  );
}

function ConfigForm() {
  const [nummer, setNummer] = useState("L999");
  const [name, setName] = useState("Freie Bestellung (Lager) - ohne Lieferânt");
  const [projekt, setProjekt] = useState(false);

  return (
    <main className="flex-1 mt-2 pt-[15px] pb-4 pl-[13px] border border-[#a0a0a0] grid grid-cols-[1224fr_10px_382fr_289fr] content-start">
      <section>
        <Heading className="mr-[47px]">Allgemein</Heading>

        <div className="grid grid-cols-2 pt-[7px]">
          {/* Left half */}
          <div>
            <div className="h-[35px] flex items-start">
              <Label id="nummer">Nummer / Name:</Label>
              <input id="nummer" value={nummer} onChange={(e) => setNummer(e.target.value)} className={`${inputBase} w-[67px] mr-0.5 bg-white`} />
              <input aria-label="Name" value={name} onChange={(e) => setName(e.target.value)} className={`${inputBase} flex-1 bg-white`} />
              <div className="w-[107px] pl-1.5 flex">
                <IconButton label="Bearbeiten"><PencilIcon /></IconButton>
              </div>
            </div>
            <div className="h-[34px] flex items-start">
              <Label id="lieferant">Lieferant:</Label>
              <input id="lieferant" readOnly value="" className={inputLocked} />
              <div className="w-[107px] pl-1.5 flex gap-[11px]">
                <IconButton label="Lieferant wählen"><SheetIcon /></IconButton>
                <IconButton label="Lieferant entfernen" className="opacity-35"><CrossIcon /></IconButton>
              </div>
            </div>
            <div className="h-[37px] flex items-start">
              <Label id="bestelltyp">Bestelltyp:</Label>
              <input id="bestelltyp" readOnly value="Direktfreigabe Einkauf (Projekt)" className={inputLocked} />
              <div className="w-[107px] pl-1.5 flex gap-[11px]">
                <IconButton label="Bestelltyp wählen"><SheetIcon /></IconButton>
                <IconButton label="Bestelltyp entfernen"><CrossIcon /></IconButton>
              </div>
            </div>

            <Heading className="mr-[47px]">Belegarten</Heading>
            <div className="flex pt-2">
              <DataGrid columns={belegColumns} rows={belegRows} selected={0} focusCol={0} thumb="w-3/4" className="flex-1 min-w-0 h-[161px]" />
              <AddRemove className="pl-2" />
            </div>

            <Heading className="mt-[11px] mr-[47px]">Benutzer</Heading>
            <div className="pt-1.5 pr-[47px]">
              <DataGrid columns={userColumns} rows={[["Benutzer", "Boeker", "Andreas"]]} selected={0} focusCol={0} thumb="w-2/3" className="h-[161px]" />
              <div className="px-px pt-1.5">
                <button className="w-full h-[25px] flex items-center justify-center gap-1.5 bg-[#e1e1e1] border border-[#adadad]">
                  <PlayIcon />
                  Ausführen
                </button>
              </div>
            </div>
          </div>

          {/* Right half */}
          <div>
            <div className="h-[35px] flex items-start">
              <label className="h-[26px] flex items-center gap-[3px]">
                <input
                  type="checkbox"
                  checked={projekt}
                  onChange={(e) => setProjekt(e.target.checked)}
                  className="w-[13px] h-[13px] appearance-none bg-white border border-[#333] checked:bg-[#333]"
                />
                Projektbezug
              </label>
            </div>
            <div className="h-[34px] flex items-start pr-[47px]">
              <Label id="auswahl" className="w-[257px]">Mandantenauswahl (für Nicht-Projektbelege):</Label>
              <Select id="auswahl" value="angemeldeter Mandant" options={["angemeldeter Mandant"]} />
            </div>
            <div className="h-[37px] flex items-start">
              <Label id="mandant" className="w-[257px]">Mandant:</Label>
              <input id="mandant" readOnly value="swp-Bau GmbH" className={inputLocked} />
              <div className="w-[47px] pl-2.5">
                <IconButton label="Mandant suchen"><SearchGlass className="w-4 h-4" /></IconButton>
              </div>
            </div>

            <Heading className="mr-[47px]">Warengruppen</Heading>
            <div className="flex pt-2">
              <DataGrid columns={[{ label: "Datensatz", last: true }]} rows={[]} thumb="w-2/3" className="flex-1 min-w-0 h-[161px]" />
              <AddRemove className="pl-2.5" />
            </div>

            <Heading className="mt-[11px] mr-[47px]">Artikelnummernbereiche</Heading>
            <div className="pt-1.5 pr-[47px]">
              <DataGrid columns={rangeColumns} rows={[]} className="h-[161px]" />
            </div>
          </div>
        </div>
      </section>

      <section className="col-start-3">
        <Heading>Lieferung</Heading>
        <div className="pt-[7px] flex items-start">
          <Label id="anlieferung" className="w-[114px]">Anlieferung:</Label>
          <Select id="anlieferung" value="Werk" options={["Werk"]} />
        </div>
      </section>
    </main>
  );
}

function App() {
  const [tab, setTab] = useState("Materialanforde...");

  return (
    <div className="min-h-screen flex flex-col bg-[#f0f0f0] text-black text-[11px] leading-4 font-['Noto_Sans','Open_Sans',sans-serif]">
      <div className="bg-white">
        <TitleBar />
        <MenuBar />
        <Toolbar />
        <div className="grid grid-cols-2">
          <input aria-label="Suchen nach" className="min-w-0 h-[22px] px-1 border border-[#a0a0a0] outline-none" />
          <div className="min-w-0 h-[22px] flex items-center pl-1.5 pr-0.5 border border-[#7a7a7a]">
            <svg className="w-4 h-4" viewBox="0 0 16 16">
              <path d="M5 0.500h5l-3 5h3l-7 10 2-7.500h-4z" fill="#fbd36b" stroke="#a98231" strokeWidth=".8" />
              <path d="M11 4.500h5M11 7.500h5M11 10.500h5M11 13.500h5" stroke="#444" />
            </svg>
            <select aria-label="Suchfeld" className="flex-1 min-w-0 px-[3px] appearance-none bg-transparent outline-none">
              <option>Nummer</option>
              <option>Name</option>
            </select>
            <Chevron />
          </div>
        </div>
      </div>

      <DataGrid main columns={configColumns} rows={configRows} selected={4} focusCol={1} className="h-[204px]" />

      <ConfigForm />

      {/* Open windows */}
      <div className="h-[27px] flex items-center pl-0.5 bg-white border-b-2 border-[#dcdcdc]">
        {tabs.map(([label, icon]) => (
          <button
            key={label}
            onClick={() => setTab(label)}
            className={`w-[120px] h-[21px] flex items-center gap-1 px-0.5 whitespace-nowrap border ${tab === label ? "bg-[#cce8ff] border-[#99d1ff]" : "border-transparent"}`}
          >
            {icon}
            {label}
          </button>
        ))}
      </div>

      {/* Status bar */}
      <div className="h-[22px] py-px flex">
        {statusCells.map(([text, width], i) => (
          <span key={i} className={`${width} pl-0.5 leading-5 text-center border-r border-[#d7d7d7]`}>{text}</span>
        ))}
        <span className="w-[250px] leading-5 pl-1 border-r border-[#d7d7d7]">Mandant: 1 swp-Bau GmbH</span>
      </div>

      <Taskbar />
    </div>
  );
}

export default App;
